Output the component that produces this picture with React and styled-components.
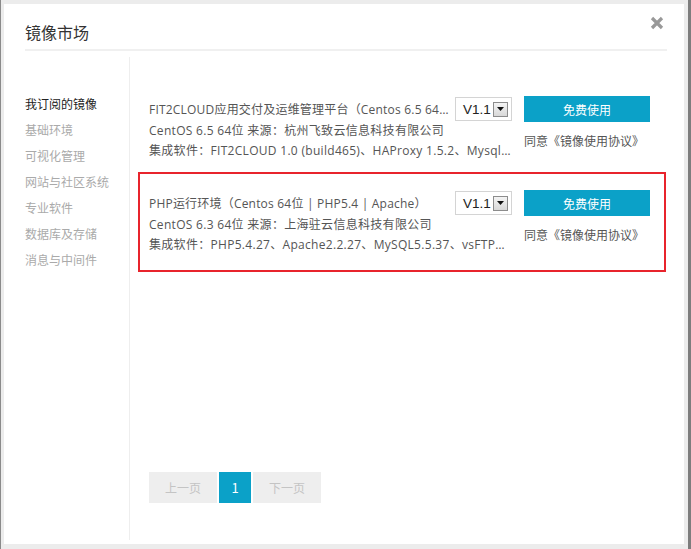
import React from "react";
import styled, { createGlobalStyle } from "styled-components";

const GlobalStyle = createGlobalStyle`
  html, body {
    margin: 0;
    padding: 0;
    background: #e9e9e9;
  }
  body {
    font-family: "Open Sans", "Noto Sans CJK SC", sans-serif;
    font-size: 12px;
    color: #555;
  }
`;

const Page = styled.div`
  width: 691px;
  height: 549px;
  box-sizing: border-box;
  padding: 4px 4px 0 3px;
  background: #ececec;
  border-left: 1px solid #8a8a8a;
  border-right: 3px solid #7d7d7d;
  overflow: hidden;
`;

const Modal = styled.div`
  position: relative;
  width: 680px;
  height: 540px;
  background: #fff;
  display: flex;
  flex-direction: column;
`;

const Header = styled.div`
  margin: 0 17px 0 21px;
  padding: 17px 0 6px;
  border-bottom: 2px solid #f0f0f0;
`;

const Title = styled.h3`
  margin: 0;
  font-family: "Noto Sans CJK SC", sans-serif;
  font-size: 16px;
  line-height: 22px;
  font-weight: normal;
  color: #333;
`;

const Close = styled.button`
  position: absolute;
  top: 12px;
  right: 20px;
  width: 14px;
  height: 14px;
  padding: 0;
  border: 0;
  background: none;
  cursor: pointer;
  display: flex;
`;

const Body = styled.div`
  flex: 1;
  display: flex;
  padding: 6px 0 4px;
  min-height: 0;
`;

const Sidebar = styled.ul`
  width: 126px;
  flex: none;
  margin: 0;
  padding: 34px 0 0 21px;
  box-sizing: border-box;
  list-style: none;
  border-right: 1px solid #eee;
  font-family: "Noto Sans CJK SC", sans-serif;
`;

const NavItem = styled.li`
  line-height: 26px;
  color: ${p => (p.$active ? "#222" : "#aaa")};
  cursor: pointer;
`;

const Main = styled.div`
  flex: 1;
  display: flex;
  flex-direction: column;
  padding: 21px 0 37px 8px;
  min-width: 0;
`;

const List = styled.div`
  width: 528px;
`;

const Item = styled.div`
  display: flex;
  gap: 12px;
  padding: 17px 14px ${p => (p.$selected ? "15px" : "9px")} 9px;
  border: 2px solid ${p => (p.$selected ? "#e8242c" : "transparent")};
`;

const Info = styled.div`
  width: 363px;
  flex: none;
  min-width: 0;
`;

const TitleRow = styled.div`
  display: flex;
  align-items: center;
  height: 24px;
  gap: 6px;
`;

const ItemName = styled.div`
  flex: 1;
  min-width: 0;
  font-size: 12px;
  letter-spacing: 0.2px;
  white-space: nowrap;
  overflow: hidden;
  text-overflow: ellipsis;
  color: #555;
`;

const Line = styled.div`
  line-height: 20px;
  letter-spacing: 0.3px;
  white-space: nowrap;
  overflow: hidden;
  text-overflow: ellipsis;
  color: #555;
`;

const Select = styled.div`
  width: 57px;
  height: 24px;
  flex: none;
  box-sizing: border-box;
  border: 1px solid #d4d4d4;
  display: flex;
  align-items: center;
  justify-content: space-between;
  padding: 0 3px 0 7px;
  font-family: "Liberation Sans", Arial, sans-serif;
  font-size: 13.5px;
  color: #222;
`;

const Arrow = styled.span`
  width: 15px;
  height: 15px;
  box-sizing: border-box;
  border: 1px solid #8c8c8c;
  background: linear-gradient(#f4f4f4, #d8d8d8);
  display: flex;
  align-items: center;
  justify-content: center;
`;

const Actions = styled.div`
  width: 126px;
  flex: none;
  margin-top: -1px;
  font-family: "Noto Sans CJK SC", sans-serif;
`;

const UseButton = styled.button`
  display: block;
  width: 126px;
  height: 26px;
  border: 0;
  padding: 0;
  background: #0ba1c8;
  color: #fff;
  font-family: inherit;
  font-size: 12px;
  cursor: pointer;
`;

const Agreement = styled.div`
  margin-top: 9px;
  line-height: 20px;
  color: #555;
  white-space: nowrap;
`;

const Pager = styled.div`
  margin-top: auto;
  margin-left: 11px;
  display: flex;
  gap: 2px;
  font-family: "Noto Sans CJK SC", sans-serif;
`;

const PageBtn = styled.span`
  height: 31px;
  min-width: ${p => (p.$wide ? "68px" : "32px")};
  display: flex;
  align-items: center;
  justify-content: center;
  background: ${p => (p.$current ? "#0ba1c8" : "#eeeeee")};
  color: ${p => (p.$current ? "#fff" : "#c4c4c4")};
  font-size: ${p => (p.$current ? "13px" : "12px")};
`;

const CloseIcon = () => (
  <svg width="14" height="14" viewBox="0 0 14 14">
    <path d="M2 2 L12 12 M12 2 L2 12" stroke="#999" strokeWidth="3.2" />
  </svg>
);

const ArrowIcon = () => (
  <svg width="7" height="4" viewBox="0 0 7 4">
    <path d="M0 0 H7 L3.5 4 Z" fill="#111" />
  </svg>
);

const categories = [
  "我订阅的镜像",
  "基础环境",
  "可视化管理",
  "网站与社区系统",
  "专业软件",
  "数据库及存储",
  "消息与中间件",
];

const images = [
  {
    name: "FIT2CLOUD应用交付及运维管理平台（Centos 6.5 64位 | FIT2CLOUD 1.0）",
    source: "CentOS 6.5 64位 来源：杭州飞致云信息科技有限公司",
    software: "集成软件：FIT2CLOUD 1.0 (build465)、HAProxy 1.5.2、MysqlServer 5.1",
    version: "V1.1",
  },
  {
    name: "PHP运行环境（Centos 64位 | PHP5.4 | Apache）",
    source: "CentOS 6.3 64位 来源：上海驻云信息科技有限公司",
    software: "集成软件：PHP5.4.27、Apache2.2.27、MySQL5.5.37、vsFTPd2.2.2",
    version: "V1.1",
    selected: true,
  },
];

const App = () => {
  return (
    <Page>
      <GlobalStyle />
      <Modal>
        <Header>
          <Title>镜像市场</Title>
        </Header>
        <Close aria-label="关闭">
          <CloseIcon />
        </Close>
        <Body>
          <Sidebar>
            {categories.map((c, i) => (
              <NavItem key={c} $active={i === 0}>
                {c}
              </NavItem>
            ))}
          </Sidebar>
          <Main>
            <List>
              {images.map(img => (
                <Item key={img.name} $selected={img.selected}>
                  <Info>
                    <TitleRow>
                      <ItemName>{img.name}</ItemName>
                      <Select>
                        {img.version}
                        <Arrow>
                          <ArrowIcon />
                        </Arrow>
                      </Select>
                    </TitleRow>
                    <Line>{img.source}</Line>
                    <Line>{img.software}</Line>
                  </Info>
                  <Actions>
                    <UseButton>免费使用</UseButton>
                    <Agreement>同意《镜像使用协议》</Agreement>
                  </Actions>
                </Item>
              ))}
            </List>
            <Pager>
              <PageBtn $wide>上一页</PageBtn>
              <PageBtn $current>1</PageBtn>
              <PageBtn $wide>下一页</PageBtn>
            </Pager>
          </Main>
        </Body>
      </Modal>
    </Page>
  );
};

export default App;
